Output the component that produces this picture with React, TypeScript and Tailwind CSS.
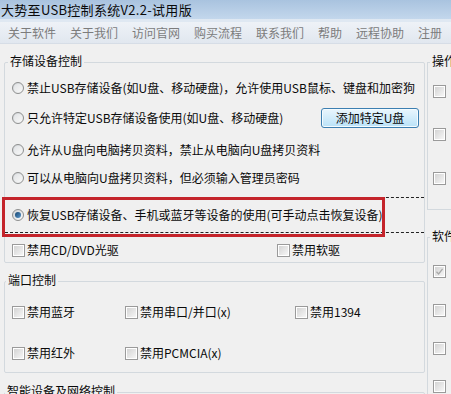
import React from "react";

const Radio = ({ checked }: { checked?: boolean }) => (
  <span className="inline-flex w-[12px] h-[12px] rounded-full border border-[#8e8f8f] bg-linear-to-br from-[#cfd3d6] to-[#fbfbfb] items-center justify-center shrink-0">
    {checked ? (
      <span className="w-[6px] h-[6px] rounded-full bg-linear-to-br from-[#17456f] to-[#5b9ad0]" />
    ) : (
      <span className="w-[8px] h-[8px] rounded-full bg-linear-to-br from-[#e2e4e6] to-[#f7f7f7]" />
    )}
  </span>
);

const Check = ({ checked }: { checked?: boolean }) => (
  <span className="inline-flex w-[13px] h-[13px] border border-[#9a9a9a] bg-white p-[1px] shrink-0">
    <span className="flex-1 bg-linear-to-br from-[#d4d4d4] to-[#f6f6f6] flex items-center justify-center">
      {checked && (
        <svg width="9" height="9" viewBox="0 0 9 9">
          <path d="M1.5 4.8 L3.6 7 L7.6 1.8" fill="none" stroke="#a8a8a8" strokeWidth="1.3" />
        </svg>
      )}
    </span>
  </span>
);

const RadioRow = ({ text, checked }: { text: string; checked?: boolean }) => (
  <div className="flex items-center gap-[3px] pl-[7px]">
    <Radio checked={checked} />
    <span className="whitespace-nowrap">{text}</span>
  </div>
);

const CheckItem = ({ text, checked }: { text: string; checked?: boolean }) => (
  <div className="flex items-center gap-[2px]">
    <Check checked={checked} />
    <span className="whitespace-nowrap">{text}</span>
  </div>
);

const menu = ["关于软件", "关于我们", "访问官网", "购买流程", "联系我们", "帮助", "远程协助", "注册"];

export default function App() {
  return (
    <div className="w-[451px] h-[394px] overflow-hidden bg-[#f0f0f0] text-[12px] leading-[16px] text-[#0a0a0a] font-['Noto_Sans_CJK_SC','Microsoft_YaHei',sans-serif]">
      {/* title bar */}
      <div className="h-[19px] bg-linear-to-b from-[#a9c3df] to-[#c3d7ec] flex items-center pl-[1px] text-[13px] text-[#0a0a0a]">
        <span className="whitespace-nowrap tracking-[0.3px]">大势至USB控制系统V2.2-试用版</span>
      </div>
      <div className="h-[3px] bg-[#dfe8f2]" />
      {/* menu */}
      <div className="h-[21px] bg-linear-to-b from-[#eef2f7] to-[#e1e7ef] flex items-center pl-[1px] text-[#7c7c7c]">
        {menu.map((m) => (
          <span key={m} className="px-[7px] whitespace-nowrap">
            {m}
          </span>
        ))}
      </div>
      <div className="h-[1px] bg-[#d6dde6]" />

      <div className="flex">
        {/* left column */}
        <div className="w-[425px] pl-[4px] shrink-0">
          {/* storage group */}
          <div className="relative mt-[18px] border border-[#d3d9de] rounded-[2px]">
            <span className="absolute left-[3px] -top-[10px] px-[2px] bg-[#f0f0f0] whitespace-nowrap">存储设备控制</span>
            <div className="h-[24px] mt-[13px] flex items-center">
              <RadioRow text="禁止USB存储设备(如U盘、移动硬盘)，允许使用USB鼠标、键盘和加密狗" />
            </div>
            <div className="h-[24px] mt-[6px] flex items-center pr-[5px]">
              <RadioRow text="只允许特定USB存储设备使用(如U盘、移动硬盘)" />
              <button className="ml-auto w-[98px] h-[20px] rounded-[3px] border border-[#3c7fb1] bg-linear-to-b from-[#eaf6fd] to-[#b9e2f8] shadow-[inset_0_0_0_1px_#f4fbff] text-[12px] text-[#0a0a0a] flex items-center justify-center">
                添加特定U盘
              </button>
            </div>
            <div className="h-[24px] mt-[8px] flex items-center">
              <RadioRow text="允许从U盘向电脑拷贝资料，禁止从电脑向U盘拷贝资料" />
            </div>
            <div className="h-[24px] mt-[4px] flex items-center">
              <RadioRow text="可以从电脑向U盘拷贝资料，但必须输入管理员密码" />
            </div>
            <div className="relative h-[36px] mt-[7px] border-y border-dashed border-[#222] flex items-center pb-[1px]">
              <RadioRow checked text="恢复USB存储设备、手机或蓝牙等设备的使用(可手动点击恢复设备)" />
              <div className="absolute -left-[3px] -top-[1px] w-[383px] h-[40px] border-[3px] border-[#c4242b]" />
            </div>
            <div className="h-[24px] mt-[5px] flex items-center pl-[7px]">
              <div className="w-[265px]">
                <CheckItem text="禁用CD/DVD光驱" />
              </div>
              <CheckItem text="禁用软驱" />
            </div>
          </div>

          {/* port group */}
          <div className="relative mt-[18px] border border-[#d3d9de] rounded-[2px] pb-[7px]">
            <span className="absolute left-[1px] -top-[10px] px-[2px] bg-[#f0f0f0] whitespace-nowrap">端口控制</span>
            <div className="h-[24px] mt-[18px] flex items-center pl-[7px]">
              <div className="w-[113px]">
                <CheckItem text="禁用蓝牙" />
              </div>
              <div className="w-[170px]">
                <CheckItem text="禁用串口/并口(x)" />
              </div>
              <CheckItem text="禁用1394" />
            </div>
            <div className="h-[24px] mt-[17px] flex items-center pl-[7px]">
              <div className="w-[113px]">
                <CheckItem text="禁用红外" />
              </div>
              <CheckItem text="禁用PCMCIA(x)" />
            </div>
          </div>

          {/* smart device group */}
          <div className="relative mt-[19px] border border-[#d3d9de] rounded-[2px] h-[40px]">
            <span className="absolute left-[0px] -top-[10px] px-[2px] bg-[#f0f0f0] whitespace-nowrap">智能设备及网络控制</span>
          </div>
        </div>

        {/* right column */}
        <div className="ml-[2px] flex-1">
          <div className="relative mt-[18px] border-l border-t border-b border-[#d3d9de] h-[148px]">
            <span className="absolute left-[2px] -top-[10px] px-[2px] bg-[#f0f0f0] whitespace-nowrap">操作</span>
            <div className="pl-[5px] pt-[20px] flex flex-col">
              <div className="h-[13px]"><Check /></div>
              <div className="h-[13px] mt-[30px]"><Check /></div>
              <div className="h-[13px] mt-[31px]"><Check /></div>
            </div>
          </div>
          <div className="relative mt-[27px] border-l border-t border-[#d3d9de] h-[200px]">
            <span className="absolute left-[2px] -top-[10px] px-[2px] bg-[#f0f0f0] whitespace-nowrap">软件</span>
            <div className="pl-[5px] pt-[25px] flex flex-col">
              <div className="h-[13px]"><Check checked /></div>
              <div className="h-[13px] mt-[26px]"><Check /></div>
              <div className="h-[13px] mt-[25px]"><Check /></div>
              <div className="h-[13px] mt-[25px]"><Check /></div>
            </div>
          </div>
        </div>
      </div>
    </div>
  );
}
